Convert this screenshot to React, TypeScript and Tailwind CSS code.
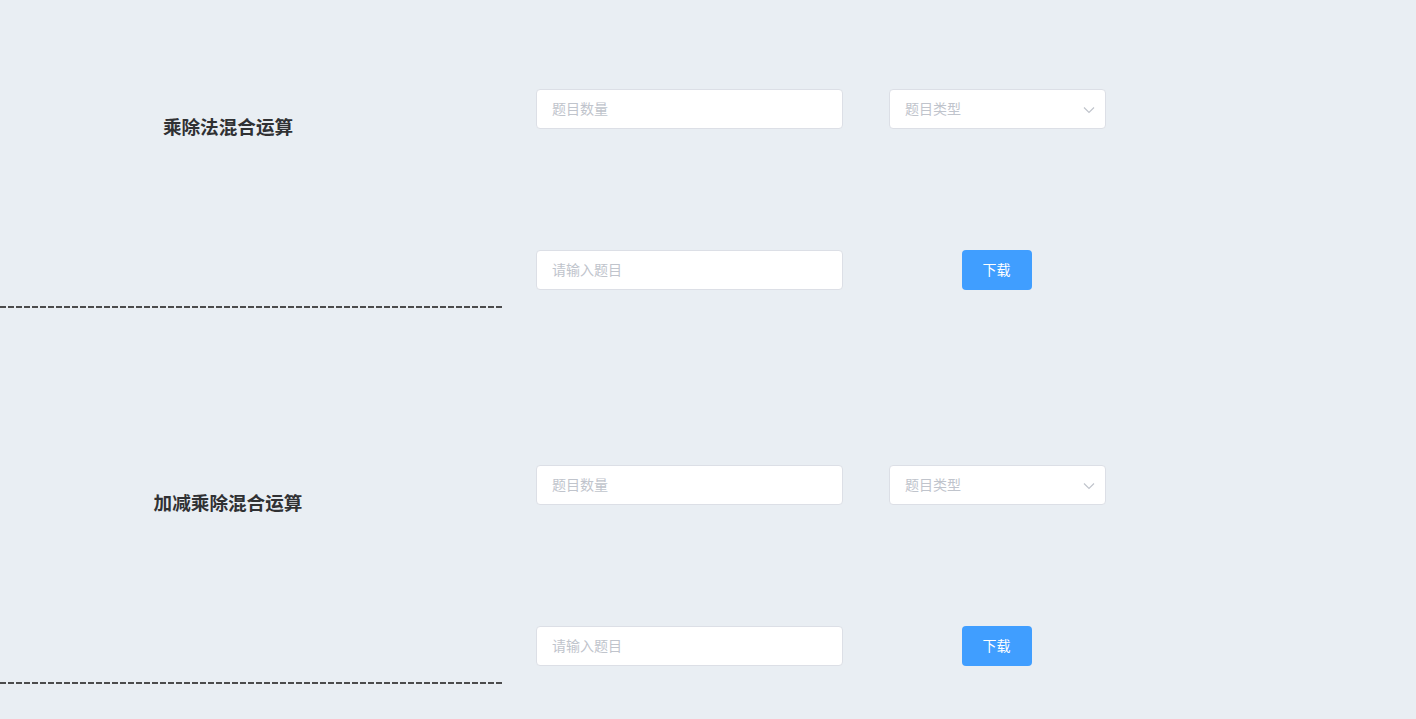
import React from 'react';

const font = { fontFamily: '"Liberation Sans", "Noto Sans CJK SC", sans-serif' };

function Chevron() {
  return (
    <svg width="12" height="8" viewBox="0 0 12 8" className="absolute right-[11px] top-[17px]">
      <path d="M1 1.5 L6 6.5 L11 1.5" fill="none" stroke="#c0c4cc" strokeWidth="1.2" />
    </svg>
  );
}

function Section({ title }: { title: string }) {
  return (
    <div className="flex h-[376px]">
      <div className="w-[504px] flex flex-col">
        <div className="h-[306px]">
          <div className="w-[456px] mt-[116px] text-center text-[18.6px] leading-[24px] font-bold text-[#303133]">
            {title}
          </div>
        </div>
        <div className="h-[2px] bg-[repeating-linear-gradient(90deg,#3a3a3a_0_6px,transparent_6px_8px)] opacity-90" />
      </div>
      <div className="ml-[32px] pt-[89px]">
        <div className="flex">
          <input
            placeholder="题目数量"
            className="w-[307px] h-10 rounded bg-white border border-[#dcdfe6] px-[15px] text-sm text-[#606266] placeholder:text-[#c0c4cc] outline-none"
            style={font}
          />
          <div className="relative ml-[46px] w-[217px] h-10">
            <input
              readOnly
              placeholder="题目类型"
              className="w-full h-10 rounded bg-white border border-[#dcdfe6] px-[15px] text-sm placeholder:text-[#c0c4cc] outline-none"
              style={font}
            />
            <Chevron />
          </div>
        </div>
        <div className="flex mt-[121px]">
          <input
            placeholder="请输入题目"
            className="w-[307px] h-10 rounded bg-white border border-[#dcdfe6] px-[15px] text-sm text-[#606266] placeholder:text-[#c0c4cc] outline-none"
            style={font}
          />
          <div className="ml-[46px] w-[215px] flex justify-center">
            <button className="w-[70px] h-10 rounded bg-[#409eff] text-white text-sm" style={font}>
              下载
            </button>
          </div>
        </div>
      </div>
    </div>
  );
}

export default function App() {
  return (
    <div className="min-h-screen bg-[#e9eef3]" style={font}>
      <Section title="乘除法混合运算" />
      <Section title="加减乘除混合运算" />
    </div>
  );
}
